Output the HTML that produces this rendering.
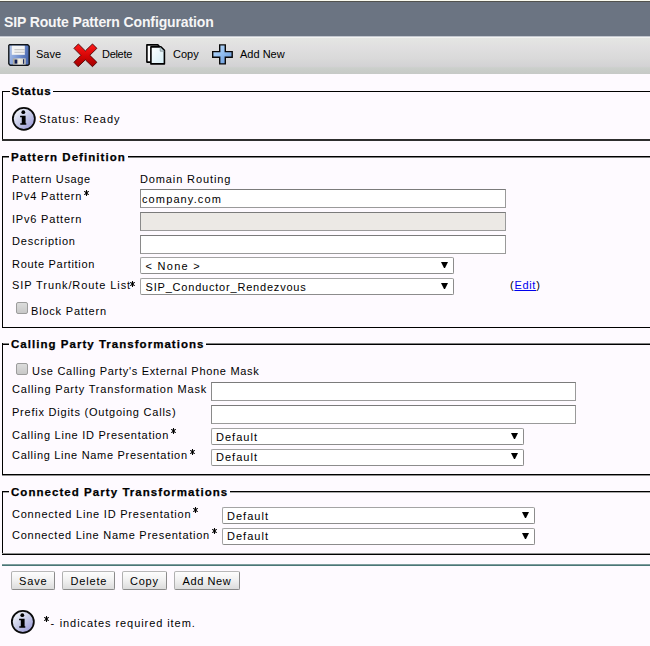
<!DOCTYPE html>
<html><head><meta charset="utf-8">
<style>
html,body{margin:0;padding:0;}
body{width:650px;height:646px;overflow:hidden;background:#fefaff;position:relative;font-family:"Liberation Sans",sans-serif;color:#000;}
.a{position:absolute;}
.t{position:absolute;font-size:11px;line-height:13px;white-space:nowrap;letter-spacing:0.7px;color:#000;}
.lg{position:absolute;font-size:11.5px;font-weight:bold;line-height:13px;white-space:nowrap;letter-spacing:0.95px;color:#000;background:#fefaff;padding:0 2px 0 2px;-webkit-text-stroke:0.25px #000;}
.fs{position:absolute;border-style:solid;border-color:#111 #111 #222 #111;border-width:1px 0 2px 1px;left:2px;width:700px;box-sizing:border-box;box-shadow:inset 1px -1px 0 #fff;}
.in{position:absolute;box-sizing:border-box;border:1px solid #9a9a9a;border-top-color:#7b7b7b;border-left-color:#8a8a8a;background:#fff;height:19px;}
.sel{position:absolute;box-sizing:border-box;border:1px solid #a4a4a4;border-right-color:#8c8c8c;border-bottom-color:#8c8c8c;border-radius:2px;background:#fff;height:17px;}
.arr{position:absolute;width:1px;height:0;border-left:3px solid transparent;border-right:3px solid transparent;border-top:6px solid #000;}
.ast{position:absolute;font-size:16px;font-weight:bold;line-height:13px;color:#000;}
.cb{position:absolute;width:12px;height:12px;box-sizing:border-box;border:1px solid #9c9c9c;border-radius:2px;background:linear-gradient(#dcdcdc,#c8c8c8);}
.btn{position:absolute;box-sizing:border-box;height:19px;border:1px solid #8a8a8a;border-top-color:#b8b8b8;border-left-color:#b0b0b0;border-radius:2px;background:linear-gradient(#fdfdfd,#f0f0f0 50%,#dcdcdc);}
.tb{position:absolute;font-size:11px;line-height:13px;white-space:nowrap;color:#000;}
</style></head><body>

<!-- title bar -->
<div class="a" style="left:0;top:0;width:650px;height:1px;background:#fbfbf0"></div>
<div class="a" style="left:0;top:1px;width:650px;height:1px;background:#52524e"></div>
<div class="a" style="left:0;top:2px;width:650px;height:34px;background:#6b7482"></div>
<div class="a" style="left:4px;top:14px;font-size:14px;line-height:16px;font-weight:bold;color:#f6f6f6;letter-spacing:-0.13px;white-space:nowrap">SIP Route Pattern Configuration</div>

<!-- toolbar -->
<div class="a" style="left:0;top:36px;width:650px;height:38px;background:linear-gradient(#c2c6ce 0,#c2c6ce 1px,#f2f3f2 1px,#f2f3f2 2px,#e5e6e3 2px,#e0dfe0 30%,#d9d9d9 60%,#d3d2d4 80%,#cbcfcb 84%,#c6c9c6 100%)"></div>
<svg class="a" style="left:4px;top:40px" width="30" height="30" viewBox="0 0 30 30">
 <defs>
  <linearGradient id="fg" x1="0" y1="0" x2="1" y2="0.3"><stop offset="0" stop-color="#b4c8ec"/><stop offset="0.5" stop-color="#7f9cd6"/><stop offset="1" stop-color="#4d6cb4"/></linearGradient>
  <linearGradient id="mg" x1="0" y1="0" x2="1" y2="0"><stop offset="0" stop-color="#a8a498"/><stop offset="0.5" stop-color="#f4f0e4"/><stop offset="1" stop-color="#c8c4b8"/></linearGradient>
 </defs>
 <path d="M5.5 4.8 H23.8 L25.2 6.2 V24.2 L24 25.2 H6.2 L4.8 23.8 V5.5 Z" fill="url(#fg)" stroke="#101418" stroke-width="1.4" stroke-linejoin="round"/>
 <rect x="7.8" y="5.8" width="13" height="9" fill="#f4f4f4"/>
 <rect x="10.4" y="9.3" width="10.4" height="0.9" fill="#b8b8b8"/>
 <rect x="10.4" y="11.8" width="10.4" height="0.9" fill="#b8b8b8"/>
 <rect x="8.9" y="18.4" width="12.8" height="6.2" fill="url(#mg)"/>
 <rect x="10.6" y="19.6" width="2.7" height="4" fill="#0c1a52"/>
 <rect x="19" y="19.2" width="1.2" height="4.6" fill="#1c2c62"/>
</svg>
<div class="tb" style="left:36px;top:48px">Save</div>
<svg class="a" style="left:70px;top:40px" width="30" height="30" viewBox="0 0 30 30">
 <defs>
  <linearGradient id="xg" x1="0" y1="0" x2="0" y2="1"><stop offset="0" stop-color="#ff1a1a"/><stop offset="0.55" stop-color="#d40404"/><stop offset="1" stop-color="#a00000"/></linearGradient>
  <radialGradient id="xglow" cx="0.5" cy="0.5" r="0.5"><stop offset="0" stop-color="#d8fbff"/><stop offset="1" stop-color="#d8fbff" stop-opacity="0"/></radialGradient>
 </defs>
 <circle cx="15.3" cy="15.3" r="6" fill="url(#xglow)"/>
 <path d="M3.95 8.36 L8.36 3.95 L15.33 10.9 L22.5 3.95 L26.9 8.36 L19.8 15.33 L26.9 22.3 L22.5 26.7 L15.33 19.8 L8.1 26.7 L3.95 22.3 L10.9 15.33 Z" fill="url(#xg)" stroke="#4a0000" stroke-width="0.9" stroke-linejoin="miter"/>
</svg>
<div class="tb" style="left:102px;top:48px;letter-spacing:-0.3px">Delete</div>
<svg class="a" style="left:140px;top:40px" width="30" height="30" viewBox="0 0 30 30">
 <defs><linearGradient id="pg" x1="0" y1="0" x2="1" y2="1"><stop offset="0" stop-color="#ffffff"/><stop offset="1" stop-color="#d4eef6"/></linearGradient></defs>
 <path d="M6.9 4.9 H17.8 L19.2 6.3 V22.1 H6.9 Z" fill="#fdfdfd" stroke="#000" stroke-width="1.6" stroke-linejoin="round"/>
 <path d="M10.9 6.9 H20.9 L24.4 10.4 V23.9 H10.9 Z" fill="url(#pg)" stroke="#000" stroke-width="1.6" stroke-linejoin="round"/>
 <path d="M20.2 7.2 L20.2 11.2 L24.2 11.2 Z" fill="#c4d4dc" stroke="#6a7a80" stroke-width="0.6"/>
</svg>
<div class="tb" style="left:173px;top:48px">Copy</div>
<svg class="a" style="left:206px;top:40px" width="30" height="30" viewBox="0 0 30 30">
 <defs><linearGradient id="plg" x1="0" y1="0" x2="1" y2="1"><stop offset="0" stop-color="#c4e2ff"/><stop offset="0.5" stop-color="#90bdf0"/><stop offset="1" stop-color="#5c8ed4"/></linearGradient></defs>
 <path d="M13.7 4.9 H19.3 V11.6 H26.2 V17.2 H19.3 V23.9 H13.7 V17.2 H6.7 V11.6 H13.7 Z" fill="url(#plg)" stroke="#0a0a0a" stroke-width="1.4" stroke-linejoin="miter"/>
</svg>
<div class="tb" style="left:240px;top:48px">Add New</div>

<!-- fieldset lines -->
<div class="a" style="left:2px;top:91px;width:648px;height:1px;background:#000"></div>
<div class="a" style="left:2px;top:91px;width:1px;height:50px;background:#000"></div>
<div class="a" style="left:2px;top:139px;width:648px;height:2px;background:#2e2e2e"></div>

<div class="a" style="left:2px;top:156px;width:648px;height:1px;background:#000"></div>
<div class="a" style="left:3px;top:157px;width:647px;height:1px;background:#808080"></div>
<div class="a" style="left:2px;top:156px;width:1px;height:172px;background:#000"></div>
<div class="a" style="left:2px;top:327px;width:648px;height:1px;background:#000"></div>

<div class="a" style="left:2px;top:343px;width:648px;height:1px;background:#808080"></div>
<div class="a" style="left:2px;top:344px;width:648px;height:1px;background:#000"></div>
<div class="a" style="left:2px;top:343px;width:1px;height:133px;background:#000"></div>
<div class="a" style="left:2px;top:474px;width:648px;height:1px;background:#000"></div>
<div class="a" style="left:2px;top:475px;width:648px;height:1px;background:#909090"></div>

<div class="a" style="left:2px;top:491px;width:648px;height:1px;background:#000"></div>
<div class="a" style="left:3px;top:492px;width:647px;height:1px;background:#a8a8a8"></div>
<div class="a" style="left:2px;top:491px;width:1px;height:64px;background:#000"></div>
<div class="a" style="left:2px;top:553px;width:648px;height:1px;background:#909090"></div>
<div class="a" style="left:2px;top:554px;width:648px;height:1px;background:#000"></div>

<!-- Status -->
<div class="lg" style="left:9.5px;top:85px;letter-spacing:0.8px">Status</div>
<svg class="a" style="left:10.9px;top:105.8px" width="26" height="26" viewBox="0 0 26 26">
 <defs><linearGradient id="ig" x1="0.15" y1="0.1" x2="0.85" y2="0.95"><stop offset="0" stop-color="#f4f6fb"/><stop offset="0.5" stop-color="#c4c8e6"/><stop offset="1" stop-color="#9c9ad8"/></linearGradient></defs>
 <circle cx="12.85" cy="12.85" r="11" fill="url(#ig)" stroke="#0a0a0a" stroke-width="1.8"/>
 <circle cx="12.3" cy="6.2" r="1.9" fill="#000"/>
 <path d="M9.1 9.8 H14.6 V17.3 H15.3 V18.7 H9.3 V17.3 H10.8 V11.2 H9.1 Z" fill="#000"/>
</svg>
<div class="t" style="left:39px;top:113px;letter-spacing:0.95px">Status: Ready</div>

<!-- Pattern Definition -->
<div class="lg" style="left:9px;top:151px;letter-spacing:1.06px">Pattern Definition</div>
<div class="t" style="left:12px;top:173px;letter-spacing:0.66px">Pattern Usage</div>
<div class="t" style="left:140px;top:173px;letter-spacing:0.88px">Domain Routing</div>
<div class="t" style="left:12px;top:190px;letter-spacing:0.81px">IPv4 Pattern</div><svg class="a" style="left:83.7px;top:190.2px" width="5" height="6" viewBox="0 0 5 6"><path d="M2.5 0.4 V5.6 M0.6 1.45 L4.4 4.55 M0.6 4.55 L4.4 1.45" stroke="#000" stroke-width="1.05" stroke-linecap="round"/><circle cx="2.5" cy="3" r="0.9" fill="#000"/></svg><div class="in" style="left:140px;top:189px;width:366px"></div>
<div class="t" style="left:142px;top:193px;letter-spacing:1.12px">company.com</div>
<div class="t" style="left:12px;top:213px;letter-spacing:0.81px">IPv6 Pattern</div>
<div class="in" style="left:140px;top:212px;width:366px;background:#ece9e5"></div>
<div class="t" style="left:12px;top:235px;letter-spacing:0.79px">Description</div>
<div class="in" style="left:140px;top:235px;width:366px"></div>
<div class="t" style="left:12px;top:258px;letter-spacing:0.69px">Route Partition</div>
<div class="sel" style="left:140px;top:257px;width:314px"></div>
<div class="t" style="left:145.5px;top:260px;letter-spacing:1.28px">&lt; None &gt;</div>
<div class="arr" style="left:441px;top:262px"></div>
<div class="t" style="left:12px;top:279px;letter-spacing:0.92px">SIP Trunk/Route List</div><svg class="a" style="left:130.0px;top:280.5px" width="5" height="6" viewBox="0 0 5 6"><path d="M2.5 0.4 V5.6 M0.6 1.45 L4.4 4.55 M0.6 4.55 L4.4 1.45" stroke="#000" stroke-width="1.05" stroke-linecap="round"/><circle cx="2.5" cy="3" r="0.9" fill="#000"/></svg><div class="sel" style="left:140px;top:278px;width:314px"></div>
<div class="t" style="left:145.5px;top:281px;letter-spacing:0.8px">SIP_Conductor_Rendezvous</div>
<div class="arr" style="left:441px;top:283px"></div>
<div class="t" style="left:510px;top:279px">(<span style="color:#0000ee;text-decoration:underline">Edit</span>)</div>
<div class="cb" style="left:16px;top:302px"></div>
<div class="t" style="left:31px;top:305px;letter-spacing:0.8px">Block Pattern</div>

<!-- Calling Party -->
<div class="lg" style="left:9px;top:338px;letter-spacing:1.03px">Calling Party Transformations</div>
<div class="cb" style="left:16px;top:363px"></div>
<div class="t" style="left:32px;top:365px">Use Calling Party's External Phone Mask</div>
<div class="t" style="left:12px;top:383px;letter-spacing:0.82px">Calling Party Transformation Mask</div>
<div class="in" style="left:211px;top:382px;width:365px"></div>
<div class="t" style="left:12px;top:406px;letter-spacing:0.77px">Prefix Digits (Outgoing Calls)</div>
<div class="in" style="left:211px;top:405px;width:365px"></div>
<div class="t" style="left:12px;top:429px;letter-spacing:0.74px">Calling Line ID Presentation</div><svg class="a" style="left:171.1px;top:428.1px" width="5" height="6" viewBox="0 0 5 6"><path d="M2.5 0.4 V5.6 M0.6 1.45 L4.4 4.55 M0.6 4.55 L4.4 1.45" stroke="#000" stroke-width="1.05" stroke-linecap="round"/><circle cx="2.5" cy="3" r="0.9" fill="#000"/></svg><div class="sel" style="left:211px;top:428px;width:313px"></div>
<div class="t" style="left:216px;top:431px;letter-spacing:1.03px">Default</div>
<div class="arr" style="left:511px;top:433px"></div>
<div class="t" style="left:12px;top:449px;letter-spacing:0.70px">Calling Line Name Presentation</div><svg class="a" style="left:190.0px;top:448.5px" width="5" height="6" viewBox="0 0 5 6"><path d="M2.5 0.4 V5.6 M0.6 1.45 L4.4 4.55 M0.6 4.55 L4.4 1.45" stroke="#000" stroke-width="1.05" stroke-linecap="round"/><circle cx="2.5" cy="3" r="0.9" fill="#000"/></svg><div class="sel" style="left:211px;top:449px;width:313px"></div>
<div class="t" style="left:216px;top:451px;letter-spacing:1.03px">Default</div>
<div class="arr" style="left:511px;top:453px"></div>

<!-- Connected Party -->
<div class="lg" style="left:9px;top:486px;letter-spacing:1.05px">Connected Party Transformations</div>
<div class="t" style="left:12px;top:508px;letter-spacing:0.78px">Connected Line ID Presentation</div><svg class="a" style="left:193.1px;top:507.2px" width="5" height="6" viewBox="0 0 5 6"><path d="M2.5 0.4 V5.6 M0.6 1.45 L4.4 4.55 M0.6 4.55 L4.4 1.45" stroke="#000" stroke-width="1.05" stroke-linecap="round"/><circle cx="2.5" cy="3" r="0.9" fill="#000"/></svg><div class="sel" style="left:222px;top:507px;width:313px"></div>
<div class="t" style="left:227px;top:510px;letter-spacing:1.03px">Default</div>
<div class="arr" style="left:522px;top:512px"></div>
<div class="t" style="left:12px;top:529px;letter-spacing:0.74px">Connected Line Name Presentation</div><svg class="a" style="left:212.1px;top:528.4px" width="5" height="6" viewBox="0 0 5 6"><path d="M2.5 0.4 V5.6 M0.6 1.45 L4.4 4.55 M0.6 4.55 L4.4 1.45" stroke="#000" stroke-width="1.05" stroke-linecap="round"/><circle cx="2.5" cy="3" r="0.9" fill="#000"/></svg><div class="sel" style="left:222px;top:528px;width:313px"></div>
<div class="t" style="left:227px;top:530px;letter-spacing:1.03px">Default</div>
<div class="arr" style="left:522px;top:533px"></div>

<!-- separator -->
<div class="a" style="left:2px;top:564px;width:648px;height:1px;background:#7f9e9e"></div>
<div class="a" style="left:2px;top:565px;width:648px;height:1px;background:#4a7676"></div>

<!-- buttons -->
<div class="btn" style="left:11px;top:571px;width:44px"></div>
<div class="t" style="left:19px;top:575px;letter-spacing:0.85px">Save</div>
<div class="btn" style="left:62px;top:571px;width:53px"></div>
<div class="t" style="left:70.5px;top:575px;letter-spacing:0.83px">Delete</div>
<div class="btn" style="left:122px;top:571px;width:45px"></div>
<div class="t" style="left:130px;top:575px;letter-spacing:0.75px">Copy</div>
<div class="btn" style="left:174px;top:571px;width:66px"></div>
<div class="t" style="left:182.5px;top:575px;letter-spacing:0.6px">Add New</div>

<!-- footer -->
<svg class="a" style="left:10px;top:609px" width="26" height="26" viewBox="0 0 26 26">
 <circle cx="12.85" cy="12.85" r="11" fill="url(#ig)" stroke="#0a0a0a" stroke-width="1.8"/>
 <circle cx="12.3" cy="6.2" r="1.9" fill="#000"/>
 <path d="M9.1 9.8 H14.6 V17.3 H15.3 V18.7 H9.3 V17.3 H10.8 V11.2 H9.1 Z" fill="#000"/>
</svg>
<svg class="a" style="left:44.2px;top:616.3px" width="5" height="6" viewBox="0 0 5 6"><path d="M2.5 0.4 V5.6 M0.6 1.45 L4.4 4.55 M0.6 4.55 L4.4 1.45" stroke="#000" stroke-width="1.05" stroke-linecap="round"/><circle cx="2.5" cy="3" r="0.9" fill="#000"/></svg>
<div class="t" style="left:50.5px;top:617px;letter-spacing:1.0px">-<span style="margin-left:4.5px;letter-spacing:0.93px">indicates required item.</span></div>

</body></html>
